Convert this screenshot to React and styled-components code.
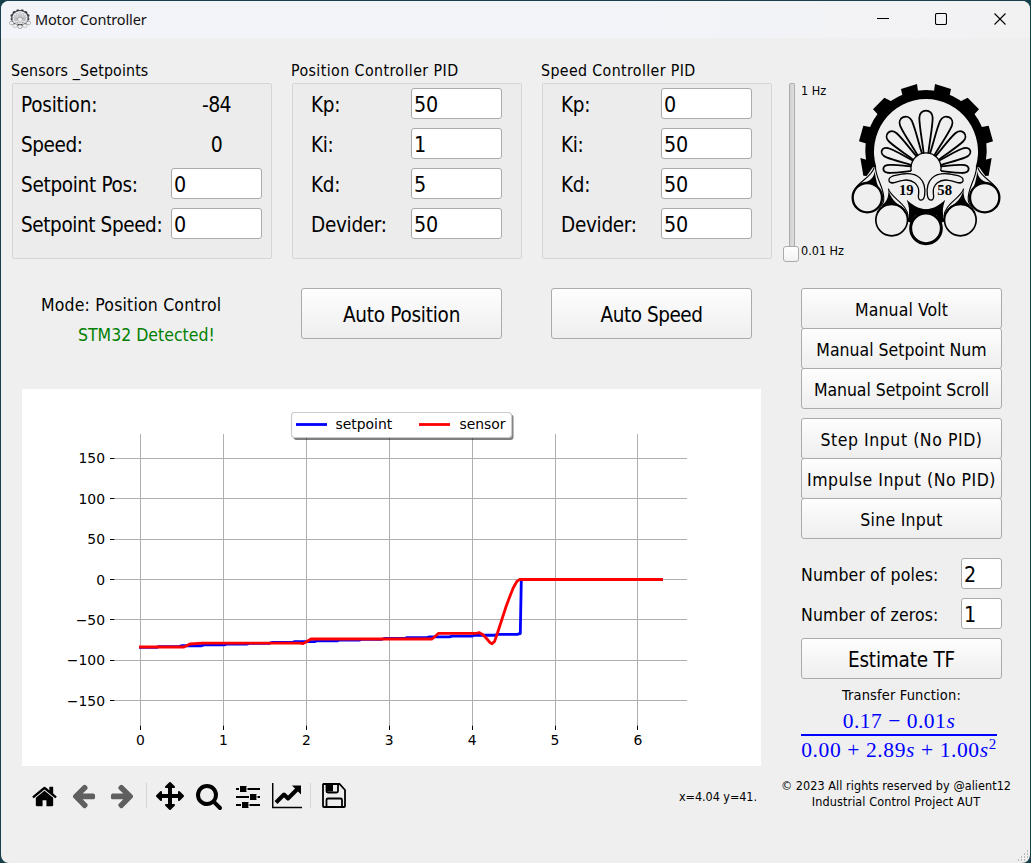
import React from "react";
import styled, { createGlobalStyle, css } from "styled-components";

const GlobalStyle = createGlobalStyle`
  * { box-sizing: border-box; }
  body {
    margin: 0;
    background: #17404d;
    color: #000;
    font-family: "DejaVu Sans Condensed", "DejaVu Sans", sans-serif;
    font-stretch: condensed;
  }
`;

const Window = styled.div`
  width: 1029px;
  height: 862px;
  margin: 1px 1px 0;
  background: #efefef;
  border-radius: 8px;
  overflow: hidden;
  display: flex;
  flex-direction: column;
`;

const TitleBar = styled.header`
  height: 37px;
  flex: none;
  background: linear-gradient(90deg, #f3f4f9 60%, #f2f2f3);
  display: flex;
  align-items: center;
  padding-left: 8px;
`;

const TitleIcon = styled.span`
  display: flex;
  opacity: 0.75;
  padding-bottom: 1px;
`;

const WindowTitle = styled.span`
  flex: 1;
  margin-left: 4px;
  padding-bottom: 2px;
  font: 14.5px/20px "Noto Sans", "Open Sans", sans-serif;
  letter-spacing: ${(p) => p.$spacing}px;
  color: #111;
`;

const WindowButton = styled.button`
  width: 58.5px;
  height: 36px;
  padding: 0 2px 2px 0;
  border: 0;
  background: none;
  display: flex;
  align-items: center;
  justify-content: center;
`;

const Label = styled.span`
  display: inline-block;
  padding-top: 2px;
  font-size: ${(p) => p.$size}px;
  line-height: 20px;
  letter-spacing: ${(p) => p.$spacing || 0}px;
  color: ${(p) => p.$color || "#000"};
  white-space: nowrap;
`;

const TopRow = styled.section`
  height: 250px;
  padding: 22px 0 0 10px;
  display: flex;
  align-items: flex-start;
  flex: none;
`;

const Group = styled.section`
  width: ${(p) => p.$width}px;
  margin-right: 19px;
  flex: none;
`;

const GroupTitle = styled.h2`
  margin: 0;
  height: 23px;
  padding-top: 1px;
  font-size: 15.8px;
  font-weight: 400;
  line-height: 20px;
  letter-spacing: ${(p) => p.$spacing}px;
  white-space: nowrap;
`;

const GroupFrame = styled.div`
  height: 176px;
  margin-left: 1px;
  padding-top: 4px;
  padding-left: ${(p) => p.$indent}px;
  padding-right: 9px;
  background: #ececec;
  border: 1px solid #d6d6d6;
  border-radius: 2px;
  display: flex;
  flex-direction: column;
  gap: 9px;
`;

const FieldRow = styled.div`
  height: 31px;
  display: flex;
  align-items: center;
  justify-content: space-between;
  padding-right: ${(p) => p.$inset || 0}px;
`;

const Reading = styled.output`
  width: 91px;
  padding-top: 2px;
  text-align: center;
  font-size: 21px;
  letter-spacing: -0.6px;
`;

const Input = styled.input`
  width: ${(p) => p.$width || 91}px;
  height: 31px;
  padding: 1px 2px 0;
  border: 1px solid #ababab;
  border-radius: 3px;
  background: #fff;
  color: #000;
  outline: none;
  font: inherit;
  font-stretch: condensed;
  font-size: 21.3px;
  letter-spacing: -0.3px;
`;

const RateControl = styled.div`
  margin: 23px 0 0 -8px;
  height: 180px;
  display: flex;
`;

const RateTrack = styled.div`
  width: 16px;
  display: flex;
  flex-direction: column;
  align-items: center;
`;

const RateGroove = styled.div`
  width: 6px;
  height: 163px;
  margin-left: 2px;
  border: 1px solid #acacac;
  border-bottom: 0;
  border-radius: 2px 2px 0 0;
  background: linear-gradient(90deg, #d2d2d2, #dedede);
`;

const RateHandle = styled.div`
  width: 16px;
  height: 16px;
  border: 1px solid #aaa;
  border-radius: 3px;
  background: linear-gradient(#fff, #f2f2f2);
`;

const RateMarks = styled.div`
  width: 46px;
  height: 182px;
  margin-left: 2px;
  display: flex;
  flex-direction: column;
  justify-content: space-between;
  margin-top: -4px;
`;

const LogoBox = styled.div`
  margin: 22px 0 0 3px;
`;

const LowerRow = styled.main`
  display: flex;
  flex: 1;
`;

const LeftColumn = styled.div`
  width: 779px;
  padding-left: 21px;
`;

const ActionRow = styled.div`
  height: 101px;
  display: flex;
`;

const Status = styled.div`
  width: 279px;
  padding: 5px 0 0 19px;
`;

const ModeLine = styled.div`
  height: 30px;
`;

const StatusLine = styled.div`
  padding-left: 37px;
`;

const Button = styled.button`
  width: 201px;
  height: ${(p) => p.$height || 41}px;
  padding: 3px 0 0;
  border: 1px solid #ababab;
  border-radius: 3px;
  background: linear-gradient(#fefefe, #eeeeee);
  color: #000;
  font: inherit;
  font-stretch: condensed;
  font-size: ${(p) => p.$size}px;
  letter-spacing: ${(p) => p.$spacing || 0}px;
  white-space: nowrap;
  display: flex;
  align-items: center;
  justify-content: center;
  flex: none;
  ${(p) => p.$stacked && css`margin-top: -1px;`}
  ${(p) => p.$gap && css`margin-right: ${p.$gap}px;`}
`;

const ChartPanel = styled.div`
  width: 739px;
  height: 377px;
  background: #fff;

  svg { display: block; }
  text {
    font-family: "DejaVu Sans", sans-serif;
    font-stretch: normal;
    font-size: 13.9px;
    fill: #000;
  }
`;

const Toolbar = styled.div`
  height: 59px;
  width: 735px;
  padding-left: 3px;
  display: flex;
  align-items: center;
`;

const ToolButton = styled.button`
  width: 39px;
  height: 39px;
  padding: ${(p) => (p.$drop ? p.$drop * 2 : 0)}px 0 0;
  border: 0;
  background: none;
  color: ${(p) => (p.$disabled ? "#5f5f5f" : "#000")};
  display: flex;
  align-items: center;
  justify-content: center;
`;

const ToolSeparator = styled.div`
  width: 8px;
  height: 25px;
  display: flex;
  justify-content: center;

  &::before {
    content: "";
    width: 1px;
    background: #d4d4d4;
  }
`;

const Coordinates = styled.div`
  margin-left: auto;
  padding-top: 2px;
  font-size: 12.5px;
  letter-spacing: ${(p) => p.$spacing}px;
  white-space: nowrap;
`;

const RightColumn = styled.aside`
  width: 250px;
  padding-left: 21px;
`;

const ButtonStack = styled.div`
  display: flex;
  flex-direction: column;
  margin-bottom: 9px;
`;

const OrderFields = styled.div`
  width: 201px;
  padding-top: 10px;
  display: flex;
  flex-direction: column;
  gap: 9px;
  margin-bottom: 9px;
`;

const Transfer = styled.div`
  width: 201px;
  height: 88px;
  padding-top: 4px;
  text-align: center;
  display: flex;
  flex-direction: column;
`;

const Fraction = styled.div`
  width: 196px;
  color: #0000ff;
  font-family: "Liberation Serif", serif;
  font-size: 21.5px;
  white-space: nowrap;
`;

const FractionPart = styled.div`
  height: ${(p) => (p.$under ? 30 : 29)}px;
  line-height: ${(p) => (p.$under ? 28 : 32)}px;
  letter-spacing: ${(p) => p.$spacing}px;
  ${(p) => p.$under && css`border-top: 2px solid #0000ff;`}

  sup {
    font-size: 15px;
    line-height: 0;
    vertical-align: 8px;
  }
`;

const Copyright = styled.footer`
  width: 232px;
  margin: 11px 0 0 -21px;
  text-align: center;
  font-size: 12.5px;
  line-height: 16px;
  white-space: nowrap;
`;

const CopyLine = styled.div`
  letter-spacing: ${(p) => p.$spacing}px;
`;

const Grip = styled.svg`
  position: absolute;
  left: 1017px;
  top: 850px;
`;

const INK = "#000";
const PAPER = "#efefef";

const petals = [
  [-91, 129, 12], [-68, 144, 14], [-47, 157, 17], [-24, 169, 19], [0, 174, 20],
  [24, 169, 19], [47, 157, 17], [68, 144, 14], [91, 129, 12],
];

function LogoSide() {
  return (
    <g>
      <path fill={INK} d="M183 57L231 42L236 78L190 90zM133 83L166 100L120 140L99 118zM70 167L107 174L90 224L57 214zM61 264L90 272L104 284L80 318L70 317z" />
      <path fill={INK} d="M104 304C102 324 88 334 72 339L98 344L116 362L122 368C112 348 107 328 104 304z" />
      <path d="M42 364C52 334 92 326 103 292" fill="none" stroke={INK} strokeWidth="3.500" />
      <path d="M106 290C108 330 136 356 131 392C129 404 120 410 112 412" fill="none" stroke={INK} strokeWidth="3.500" />
      <path fill={INK} d="M145 356C147 382 140 396 122 408L155 402L192 414C166 400 150 382 145 356z" />
      <path fill={INK} d="M200 389C210 414 209 434 201 454L212 458L226 436L260 430V418C234 416 216 404 200 389z" />
      <path d="M145 356C152 384 204 402 204 440" fill="none" stroke={INK} strokeWidth="3.500" />
      <circle cx="82" cy="383" r="44" fill={PAPER} stroke={INK} strokeWidth="7" />
      <circle cx="155" cy="450" r="47.5" fill={PAPER} stroke={INK} strokeWidth="5" />
      <path d="M112 428A48 47 0 0 1 198 430" fill="none" stroke={INK} strokeWidth="6" />
      <path d="M147 333C145 319 160 317 188 312C232 306 259 328 254 375Q252 392 240 390Q233 386 236 370C239 343 216 326 189 331C169 334 151 346 147 333z" fill={PAPER} stroke={INK} strokeWidth="4" />
    </g>
  );
}

function Logo({ width, height }) {
  return (
    <svg width={width} height={height} viewBox="30 36 456 495" preserveAspectRatio="none">
      <path fill={INK} d="M82.500 290A182 182 0 1 1 433.500 290L407 292A156 158 0 1 0 109 292z" />
      <LogoSide />
      <g transform="translate(516 0) scale(-1 1)"><LogoSide /></g>
      <circle cx="258" cy="475" r="46" fill={PAPER} stroke={INK} strokeWidth="9" />
      <g transform="translate(258 295)" fill={PAPER} stroke={INK} strokeWidth="5.5" strokeLinejoin="round">
        {petals.map(([angle, length, half]) => (
          <path
            key={angle}
            transform={`rotate(${angle})`}
            d={`M-7 -44C-9 -70 ${-half} ${-length + 50} ${-half} ${-length + 22}C${-half} ${-length - 6} ${half} ${-length - 6} ${half} ${-length + 22}C${half} ${-length + 50} 9 -70 7 -44`}
          />
        ))}
        <path fill={PAPER} stroke="none" d="M-44 15A45 45 0 1 1 44 15z" />
        <path fill="none" strokeWidth="4" d="M-44 8A45 45 0 1 1 44 8" />
      </g>
      <g fontFamily="Liberation Serif, serif" fontWeight="700" fontSize="44" fill={INK}>
        <text x="177" y="374">19</text>
        <text x="292" y="374">58</text>
      </g>
    </svg>
  );
}

const xAt = (v) => 140.5 + v * 82.9;
const yAt = (v) => 579.5 - v * 0.808;
const crisp = (n) => Math.floor(n) + 0.5;
const xTicks = [0, 1, 2, 3, 4, 5, 6];
const yTicks = [150, 100, 50, 0, -50, -100, -150];

const ramp = Array.from({ length: 18 }, (_, i) => {
  const start = i === 0 ? 0 : i * 0.272 - 0.05;
  const end = i === 17 ? 4.58 : (i + 1) * 0.272 - 0.08;
  return `${xAt(start)},${yAt(-84 + i)} ${xAt(end)},${yAt(-84 + i)}`;
}).join(" ");

const setpointLine = `${ramp} 520.3,633 521.3,579.5 661.5,579.5`;
const sensorLine =
  "140.5,647 184,647 190,644 203,643.1 300,643.1 303,643.6 306,642 311,639 432,639 435,636.5 438.5,633.3 477,633.3 479,632.6 483,634.8 487,639 490,642.6 492,643.7 494.5,641.5 497,634.5 501.7,620 506,606.7 510,596 513.3,587.7 516.7,581.7 519.5,579.5 661.5,579.5";

function Chart() {
  return (
    <svg width="739" height="377" viewBox="22 389 739 377">
      <g stroke="#b0b0b0" strokeWidth="1">
        {xTicks.map((v) => <line key={v} x1={crisp(xAt(v))} x2={crisp(xAt(v))} y1="434" y2="725" />)}
        {yTicks.map((v) => <line key={v} x1="115" x2="687" y1={crisp(yAt(v))} y2={crisp(yAt(v))} />)}
      </g>
      <g stroke="#000" strokeWidth="1">
        {xTicks.map((v) => <line key={v} x1={crisp(xAt(v))} x2={crisp(xAt(v))} y1="725.5" y2="730" />)}
        {yTicks.map((v) => <line key={v} x1="110" x2="114.5" y1={crisp(yAt(v))} y2={crisp(yAt(v))} />)}
      </g>
      {xTicks.map((v) => <text key={v} x={xAt(v)} y="745" textAnchor="middle">{v}</text>)}
      {yTicks.map((v) => (
        <text key={v} x="105" y={yAt(v) + 5} textAnchor="end">{String(v).replace("-", "−")}</text>
      ))}
      <g fill="none" strokeWidth="2.8" strokeLinejoin="round" strokeLinecap="square">
        <polyline stroke="#0000ff" points={setpointLine} />
        <polyline stroke="#ff0000" points={sensorLine} />
      </g>
      <rect x="293.5" y="414.5" width="220" height="25.5" rx="3" fill="#000" opacity=".5" />
      <rect x="291.5" y="412.5" width="220" height="25" rx="3" fill="#fff" stroke="#ccc" strokeWidth="1.2" />
      <g strokeWidth="2.8">
        <line x1="296" x2="327" y1="424.5" y2="424.5" stroke="#0000ff" />
        <line x1="419" x2="450" y1="424.5" y2="424.5" stroke="#ff0000" />
      </g>
      <text x="335.5" y="429">setpoint</text>
      <text x="459.5" y="429">sensor</text>
    </svg>
  );
}

function Glyph({ d, size, mirrored }) {
  return (
    <svg width={size} height={size} viewBox="0 0 1792 1792" fill="currentColor">
      <path d={d} transform={mirrored ? "translate(1792 0) scale(-1 1)" : undefined} />
    </svg>
  );
}

const HOME = "M1472 992v480q0 26-19 45t-45 19h-384v-384h-256v384h-384q-26 0-45-19t-19-45v-480q0-1 .5-3t.5-3l575-474 575 474q1 2 1 6zm223-69l-62 74q-8 9-21 11h-3q-13 0-21-7l-692-577-692 577q-12 8-24 7-13-2-21-11l-62-74q-8-10-7-23.5t11-21.5l719-599q32-26 76-26t76 26l244 204v-195q0-14 9-23t23-9h192q14 0 23 9t9 23v408l219 182q10 8 11 21.5t-7 23.5z";
const ARROW = "M1664 896v128q0 53-32.500 90.500t-84.500 37.500h-704l293 294q38 36 38 90t-38 90l-75 76q-37 37-90 37-52 0-91-37l-651-652q-37-37-37-90 0-52 37-91l651-650q38-38 91-38 52 0 90 38l75 74q38 38 38 91t-38 91l-293 293h704q52 0 84.500 37.500t32.500 90.500z";
const MOVE = "M1792 896q0 26-19 45l-256 256q-19 19-45 19t-45-19-19-45v-128h-384v384h128q26 0 45 19t19 45-19 45l-256 256q-19 19-45 19t-45-19l-256-256q-19-19-19-45t19-45 45-19h128v-384h-384v128q0 26-19 45t-45 19-45-19l-256-256q-19-19-19-45t19-45l256-256q19-19 45-19t45 19 19 45v128h384v-384h-128q-26 0-45-19t-19-45 19-45l256-256q19-19 45-19t45 19l256 256q19 19 19 45t-19 45-45 19h-128v384h384v-128q0-26 19-45t45-19 45 19l256 256q19 19 19 45z";
const SEARCH = "M1216 832q0-185-131.500-316.500t-316.500-131.500-316.500 131.500-131.500 316.500 131.500 316.500 316.500 131.500 316.500-131.500 131.500-316.500zm512 832q0 52-38 90t-90 38q-54 0-90-38l-343-342q-179 124-399 124-143 0-273.500-55.500t-225-150-150-225-55.500-273.500 55.500-273.500 150-225 225-150 273.500-55.500 273.500 55.500 225 150 150 225 55.500 273.500q0 220-124 399l343 343q37 37 37 90z";

function SlidersIcon() {
  return (
    <svg width="24" height="24" viewBox="0 0 24 24">
      <path d="M0 4H24M0 12H24M0 20H24" stroke="#000" strokeWidth="2" />
      <path d="M4 1H10.500V7H4zM14 9H20.500V15H14zM6 17H12.500V23H6z" fill="#000" />
      <path d="M3.500 2V6M11 2V6M13.500 10V14M21 10V14M5.500 18V22M13 18V22" stroke={PAPER} strokeWidth="1" />
    </svg>
  );
}

function PlotIcon() {
  return (
    <svg width="30" height="26" viewBox="0 0 30 26">
      <path d="M.6 0V24.500H30" fill="none" stroke="#000" strokeWidth="1.700" />
      <path d="M4 19.500L12 11.500L16 15.500L25.500 6" fill="none" stroke="#000" strokeWidth="4" strokeLinejoin="round" />
      <path d="M20 2.500H29V11.500z" fill="#000" />
    </svg>
  );
}

function SaveIcon() {
  return (
    <svg width="24" height="25" viewBox="0 0 24 25" fill="none" stroke="#000" strokeWidth="1.800">
      <path d="M1.500 1H17.500L23 7V23Q23 24 22 24H2Q1 24 1 23V1.500z" />
      <path d="M4.500 1V8Q4.500 9.500 6 9.500H14.500Q16 9.500 16 8V1" />
      <path d="M5 1H11V8.500H5z" fill="#000" stroke="none" />
      <path d="M4.500 24V17Q4.500 15.500 6 15.500H18.500Q20 15.500 20 17V24" />
    </svg>
  );
}

function PidGroup({ title, values, spacing }) {
  const names = ["Kp:", "Ki:", "Kd:", "Devider:"];
  return (
    <Group $width={231}>
      <GroupTitle $spacing={spacing}>{title}</GroupTitle>
      <GroupFrame $indent={18}>
        {names.map((name, i) => (
          <FieldRow key={name} $inset={10}>
            <Label $size={20.5} $spacing={-0.3}>{name}</Label>
            <Input defaultValue={values[i]} />
          </FieldRow>
        ))}
      </GroupFrame>
    </Group>
  );
}

export default function App() {
  return (
    <>
      <GlobalStyle />
      <Window>
        <TitleBar>
          <TitleIcon><Logo width={22} height={20} /></TitleIcon>
          <WindowTitle $spacing={-0.15}>Motor Controller</WindowTitle>
          <WindowButton aria-label="Minimize">
            <svg width="12" height="12"><path d="M0 5.500H12" stroke="#000" /></svg>
          </WindowButton>
          <WindowButton aria-label="Maximize">
            <svg width="12" height="12"><rect x=".5" y=".5" width="11" height="11" rx="1.500" fill="none" stroke="#000" strokeWidth="1.100" /></svg>
          </WindowButton>
          <WindowButton aria-label="Close">
            <svg width="12" height="12"><path d="M.5 .5L11.500 11.500M11.500 .5L.5 11.500" stroke="#000" strokeWidth="1.100" /></svg>
          </WindowButton>
        </TitleBar>

        <TopRow>
          <Group $width={261}>
            <GroupTitle $spacing={0.15}>Sensors _Setpoints</GroupTitle>
            <GroupFrame $indent={8}>
              <FieldRow>
                <Label $size={20.5} $spacing={-0.2}>Position:</Label>
                <Reading>-84</Reading>
              </FieldRow>
              <FieldRow>
                <Label $size={20.5} $spacing={-0.4}>Speed:</Label>
                <Reading>0</Reading>
              </FieldRow>
              <FieldRow>
                <Label $size={20.5} $spacing={-0.3}>Setpoint Pos:</Label>
                <Input defaultValue="0" />
              </FieldRow>
              <FieldRow>
                <Label $size={20.5} $spacing={-0.4}>Setpoint Speed:</Label>
                <Input defaultValue="0" />
              </FieldRow>
            </GroupFrame>
          </Group>
          <PidGroup title="Position Controller PID" spacing={0.42} values={["50", "1", "5", "50"]} />
          <PidGroup title="Speed Controller PID" spacing={0.37} values={["0", "50", "50", "50"]} />
          <RateControl>
            <RateTrack>
              <RateGroove />
              <RateHandle />
            </RateTrack>
            <RateMarks>
              <Label $size={12.5}>1 Hz</Label>
              <Label $size={12.5}>0.01 Hz</Label>
            </RateMarks>
          </RateControl>
          <LogoBox><Logo width={152} height={165} /></LogoBox>
        </TopRow>

        <LowerRow>
          <LeftColumn>
            <ActionRow>
              <Status>
                <ModeLine><Label $size={17.5} $spacing={0.18}>Mode: Position Control</Label></ModeLine>
                <StatusLine><Label $size={17.5} $color="#008000">STM32 Detected!</Label></StatusLine>
              </Status>
              <Button $size={20.5} $spacing={-0.25} $height={51} $gap={49}>Auto Position</Button>
              <Button $size={20.5} $spacing={-0.45} $height={51}>Auto Speed</Button>
            </ActionRow>
            <ChartPanel><Chart /></ChartPanel>
            <Toolbar>
              <ToolButton aria-label="Home" $drop={1}><Glyph d={HOME} size={27} /></ToolButton>
              <ToolButton aria-label="Back" $disabled><Glyph d={ARROW} size={27} /></ToolButton>
              <ToolButton aria-label="Forward" $disabled><Glyph d={ARROW} size={27} mirrored /></ToolButton>
              <ToolSeparator />
              <ToolButton aria-label="Pan"><Glyph d={MOVE} size={28} /></ToolButton>
              <ToolButton aria-label="Zoom"><Glyph d={SEARCH} size={28} /></ToolButton>
              <ToolButton aria-label="Subplots" $drop={1}><SlidersIcon /></ToolButton>
              <ToolButton aria-label="Axes"><PlotIcon /></ToolButton>
              <ToolSeparator />
              <ToolButton aria-label="Save"><SaveIcon /></ToolButton>
              <Coordinates $spacing={-0.05}>x=4.04 y=41.</Coordinates>
            </Toolbar>
          </LeftColumn>

          <RightColumn>
            <ButtonStack>
              <Button $size={17.5} $spacing={0.1}>Manual Volt</Button>
              <Button $size={17.5} $stacked>Manual Setpoint Num</Button>
              <Button $size={17.5} $spacing={-0.05} $stacked>Manual Setpoint Scroll</Button>
            </ButtonStack>
            <ButtonStack>
              <Button $size={17.5} $spacing={0.55}>Step Input (No PID)</Button>
              <Button $size={17.5} $spacing={0.5} $stacked>Impulse Input (No PID)</Button>
              <Button $size={17.5} $spacing={0.25} $stacked>Sine Input</Button>
            </ButtonStack>
            <OrderFields>
              <FieldRow>
                <Label $size={17.5} $spacing={0.12}>Number of poles:</Label>
                <Input $width={41} defaultValue="2" />
              </FieldRow>
              <FieldRow>
                <Label $size={17.5} $spacing={0.12}>Number of zeros:</Label>
                <Input $width={41} defaultValue="1" />
              </FieldRow>
            </OrderFields>
            <Button $size={20.5} $spacing={-0.2}>Estimate TF</Button>
            <Transfer>
              <Label $size={14.5} $spacing={0.15}>Transfer Function:</Label>
              <Fraction>
                <FractionPart $spacing={0.5}>0.17 − 0.01<i>s</i></FractionPart>
                <FractionPart $under $spacing={0.6}>0.00 + 2.89<i>s</i> + 1.00<i>s</i><sup>2</sup></FractionPart>
              </Fraction>
            </Transfer>
            <Copyright>
              <CopyLine $spacing={0.06}>© 2023 All rights reserved by @alient12</CopyLine>
              <CopyLine $spacing={0.1}>Industrial Control Project AUT</CopyLine>
            </Copyright>
          </RightColumn>
        </LowerRow>
      </Window>
      <Grip width="12" height="12">
        <path d="M10 1h1M10 4h1M7 4h1M10 7h1M7 7h1M4 7h1M7 10h1M4 10h1M1 10h1" stroke="#a8a8a8" strokeWidth="1.500" />
      </Grip>
    </>
  );
}
